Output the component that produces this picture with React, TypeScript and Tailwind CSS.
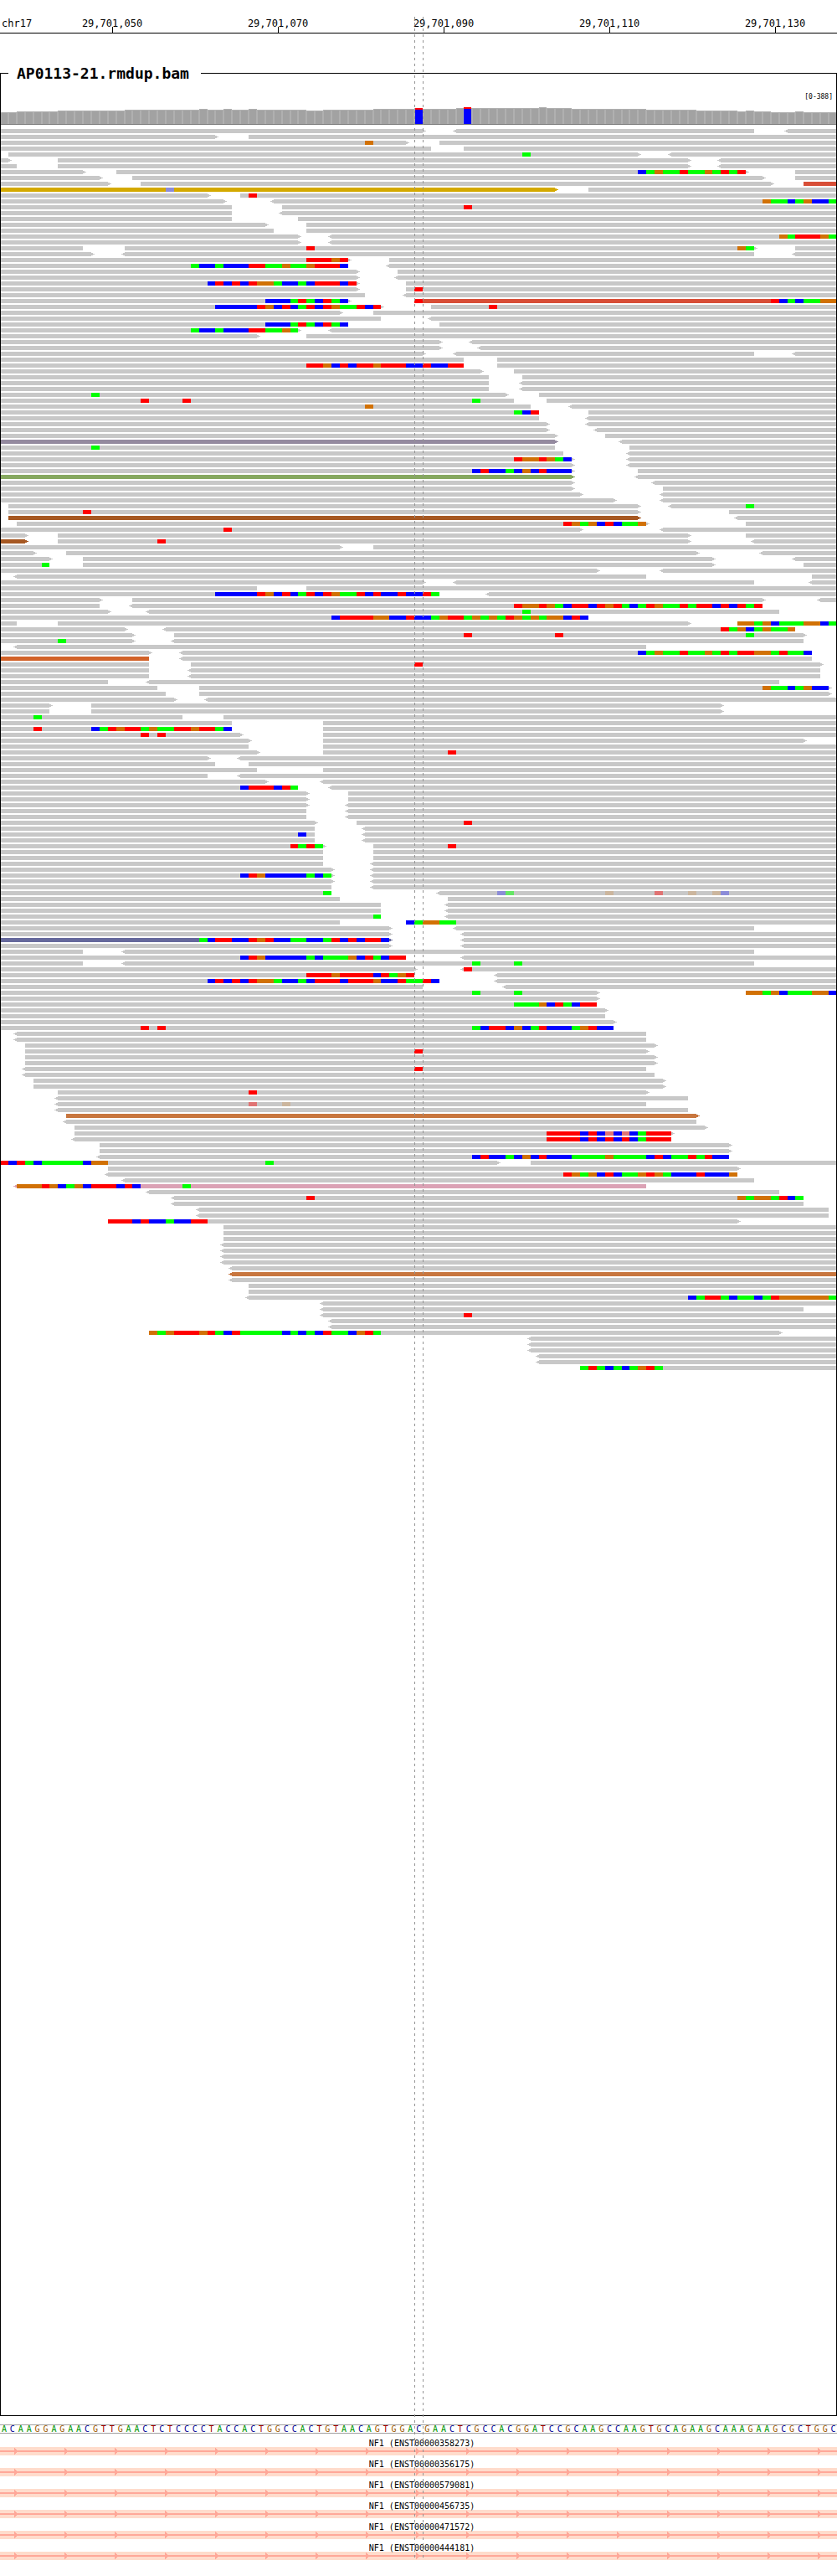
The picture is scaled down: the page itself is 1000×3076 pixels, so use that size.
import React from "react";

const BASE_WIDTH = 9.9;
const ROW_PITCH = 7;
const ROW_HEIGHT = 5;

const ALIGNMENT_FILL: Record<string, string> = {
  gray: "#c8c8c8",
  gold: "#d4a900",
  red: "#d84e37",
  purple: "#948a9f",
  green: "#86a860",
  brown: "#a65822",
  orange: "#d26229",
  copper: "#c8763e",
  slate: "#66699c",
  pink: "#dba2b5",
};

// Lower case letters are mismatches with a low base quality.
const MISMATCH_FILL: Record<string, string> = {
  A: "#00ff00",
  C: "#0000ff",
  G: "#d17105",
  T: "#ff0000",
  a: "#66e666",
  c: "#8c8cd8",
  g: "#ccb69e",
  t: "#e07474",
};

// One string per packed row. "12-88>" is a read between two base offsets with
// its strand arrow, "!name" before a read picks a fill, "37:T" is a mismatch.
const ALIGNMENT_ROWS: string[] = [
  "0-51> <55-91 <95-101",
  "0-26> 30-101",
  "0-49> 53-101 44:G",
  "0-52 56-101",
  "1-77> <81-101 63:A",
  "0-1> 7-83> <87-101",
  "0-2 7-83> <87-101",
  "0-10> 14-90> 96-101 77:CAGAATAAGATAT",
  "0-12> 16-92> 96-101",
  "0-13> 17-93> !red97-101",
  "!gold0-67> 71-101 20:c",
  "0-25> 29-101 30:T",
  "0-27> <33-101 92:GAACAGCCA",
  "0-28 34-101 56:T",
  "0-28 <34-101",
  "0-28 36-101",
  "0-32> 37-101",
  "0-33 37-101",
  "0-36> <40-101 94:GATTTGA",
  "0-36> <40-101",
  "0-10 15-91> 96-101 37:T 89:GA",
  "0-11> <15-91 <96-101",
  "0-42> 47-101 37:TTTGT",
  "0-42 <47-101 23:ACCACCCTTAAGAAGTTTC",
  "0-43> 48-101",
  "0-43> <48-101",
  "0-43> 49-101 25:CTCTCTGGACCACTTTCT",
  "0-43> 49-101 50:T",
  "0-44 <49-101",
  "0-42> !red50-101 32:CCCATACTAC 50:T 93:TCACAAGG",
  "0-46> 52-101 26:CCCCCTGCTCATCTGAATCT 59:T",
  "0-41> 45-101",
  "0-46 <52-101",
  "0-42 53-101 32:CCCATACTAC",
  "0-36> <40-101 23:ACCACCCTTAAGA",
  "0-31> 37-101",
  "0-53> <57-101",
  "0-53> <58-101",
  "0-51> <55-91 <96-101",
  "0-56 60-101",
  "0-56 60-101 37:TTGCTCTTGTTTCCTCCTT",
  "0-58> 62-101",
  "0-59 63-101",
  "0-59 <63-101",
  "0-59 <63-101",
  "0-61> 65-101 11:A",
  "0-62 66-101 17:T 22:T 57:A",
  "0-64 <69-101 44:G",
  "0-65 71-101 62:ACT",
  "0-65 <71-101",
  "0-66> <71-101",
  "0-66> <72-101",
  "0-67> 73-101",
  "!purple0-67> <75-101",
  "0-67 76-101 11:A",
  "0-68 <76-101",
  "0-69> <76-101 62:TGGTGAC",
  "0-69> <76-101",
  "0-69> 77-101 57:CTCCACGCTCCC",
  "!green0-69> <77-101",
  "0-69> <79-101",
  "0-69> 80-101",
  "0-70> <80-101",
  "0-74> <80-101",
  "1-77> <81-101 90:A",
  "1-77> 88-101 10:T",
  "!brown1-77> <89-101",
  "2-78> 90-101 68:TGAGCTCAAG",
  "0-70> <80-101 27:T",
  "0-3> 7-83> 90-101",
  "!brown0-3> 7-83> <91-101 19:T",
  "0-41> 45-101",
  "0-4> 8-84> <92-101",
  "0-6> 10-86> <96-101",
  "0-6 10-86> 97-101 5:A",
  "0-72> <80-101",
  "<2-78 98-101",
  "0-51> <55-91 <98-101",
  "0-31 37-101",
  "0-53 <59-101 26:CCCCCTGCTCATCTGAATCTCCTCCTA",
  "0-12> 16-92> <99-101",
  "0-12 <16-92 62:TGGTGACTTCTGTACATGAATATTCTCTAT",
  "0-13> <18-94 63:A",
  "0-71 40:CTTTTGGCCTCCAGTTAGAGATGAGAGGCTC",
  "0-2 7-83> 89-101 89:GGAGCAAAGGCA",
  "0-15> <20-96 87:TAGCAGAAG",
  "0-16> 21-97> 56:T 67:T 90:A",
  "0-16> <21-97 7:A",
  "<2-78",
  "0-18> <22-98 77:CAGAATAAGATATTGGATAAC",
  "!orange0-18 <22-98",
  "0-18 23-99> 50:T",
  "0-18 <23-99",
  "0-18 <23-99",
  "0-13 <18-94",
  "0-19 24-100> 92:GAACAGCC",
  "0-20 24-100>",
  "0-21> <25-101",
  "0-6> 11-87>",
  "0-6 11-87>",
  "0-22 27-101 4:A",
  "0-28 39-101",
  "0-28 39-101 4:T 11:CATGTTAGAATTGTTAC",
  "0-29> 39-101 17:T 19:T",
  "0-30> 39-97>",
  "0-30 39-101",
  "0-31> 39-101 54:T",
  "0-25> <29-101",
  "0-26 30-101",
  "0-31 39-101",
  "0-25 <29-101",
  "0-32> <39-101",
  "0-36 <40-101 29:CTTTCTA",
  "0-37> 42-101",
  "0-37> 42-101",
  "0-37> <42-101",
  "0-37 <42-101",
  "0-37 <42-101",
  "0-38> 43-101 56:T",
  "0-38 <44-101",
  "0-38 <44-101 36:C",
  "0-38 <44-101",
  "0-39> 45-101 35:TATA 54:T",
  "0-39 45-101",
  "0-39 45-101",
  "0-39 <45-101",
  "0-40> <45-101",
  "0-40> <45-101 29:CTGCCCCCACA",
  "0-40> <45-101",
  "0-40 <45-101",
  "0-40 <53-101 39:A 60:ca 73:g 79:t 83:g 86:gc",
  "0-41 54-101",
  "0-46 <54-101",
  "0-46 <54-101",
  "0-46 <54-101 45:A",
  "0-41 49-101 49:CAGGAA",
  "0-47> <55-91",
  "0-47> <56-101",
  "!slate0-47> <56-101 24:ACTTCCTGTCCAACCATCTCTTC",
  "0-47> <56-101",
  "0-10 <15-91",
  "0-49 <56-101 29:CTGCCCCCACAAAGCTACTT",
  "0-10 <15-91 57:A 62:A",
  "0-50> <56-101 56:T",
  "0-50 <60-101 37:TTTGTTTTCTAGT",
  "0-53 <60-101 25:CTCTCTGGACCACTTTCTTTGCCTAATC",
  "0-51 <61-101",
  "0-72> 90-101 57:A 62:A 90:GGAGCAAAGGC",
  "0-72>",
  "0-72 62:AAAGCTACTT",
  "0-73>",
  "0-73",
  "0-74>",
  "0-74 17:T 19:T 57:ACTTCGCATCCCAGTCC",
  "<2-78",
  "<2-78",
  "3-79>",
  "3-78> 50:T",
  "3-79>",
  "3-79>",
  "<3-78 50:T",
  "<3-79",
  "4-80>",
  "4-80>",
  "7-78> 30:T",
  "<7-83",
  "<7-78 30:t 34:g",
  "<7-83",
  "!copper8-84>",
  "<8-84",
  "9-85>",
  "9-81> 66:TTTTCTCtCtCATTT",
  "<9-81 66:TTTTCTCTCTCATTT",
  "12-88>",
  "12-88>",
  "<12-88 57:CTCCACGCTCCCAAAAGAAAACTCAATATCC",
  "0-60> 64-101 0:TCTACAAAAACGG 32:A",
  "13-89>",
  "<13-89 68:TGAGCTCAAGTGACCCTCCCG",
  "<15-91",
  "!pink<2-78 2:GGGTGCAGCTTTCTC 22:A",
  "<18-94",
  "<21-97 37:T 89:GAGGATCA",
  "<21-97",
  "<24-100",
  "<24-100",
  "13-89> 13:TTTCTCCACCTT",
  "27-101",
  "27-101",
  "27-101",
  "<27-101",
  "<27-101",
  "<27-101",
  "<27-101",
  "<28-101",
  "!copper<28-101",
  "<28-101",
  "30-101",
  "30-101",
  "<30-101 83:CATTACAACATGGGGGGA",
  "<39-101",
  "<39-97",
  "<39-101 56:T",
  "<40-101",
  "<40-101",
  "18-94> 18:GAGTTTGTACTAAAAACACACTAACGTA",
  "<64-101",
  "<64-101",
  "<64-101",
  "<65-101",
  "<65-101",
  "70-101 70:ATACACAGTA",
];

// [number of consecutive bases, column height in pixels]
const COVERAGE_RUNS: [number, number][] = [
  [2, 14], [5, 15], [8, 16], [9, 17], [1, 18], [2, 17], [1, 18], [2, 17],
  [1, 18], [6, 17], [2, 16], [6, 17], [5, 18], [1, 19], [4, 18], [10, 19],
  [1, 20], [3, 19], [9, 18], [6, 17], [5, 16], [1, 15], [1, 16], [2, 15],
  [3, 14], [1, 15], [5, 14],
];
const COVERAGE_HEIGHT = 21;
const COVERAGE = COVERAGE_RUNS.flatMap(([count, height]) =>
  Array.from({ length: count }, () => height)
);

const VARIANTS = [
  { base: 50, left: 496, height: 19 },
  { base: 56, left: 554, height: 20 },
];

const SEQUENCE =
  "ACAAGGAGAACGTTGAACTCTCCCCTACCACTGGCCACTGTAACAGTGGACGAACTCGCCACGGATCCGCAAGCCAAGTGCAGAAGCAAAGAAGCGCTGGC";

const SEQUENCE_CLASS: Record<string, string> = {
  A: "text-[#009600]",
  C: "text-[#000096]",
  G: "text-[#a05a00]",
  T: "text-[#a00000]",
};

const POSITIONS = [
  "29,701,050",
  "29,701,070",
  "29,701,090",
  "29,701,110",
  "29,701,130",
];

const TRANSCRIPTS = [
  "ENST00000358273",
  "ENST00000356175",
  "ENST00000579081",
  "ENST00000456735",
  "ENST00000471572",
  "ENST00000444181",
];

const toX = (base: number) => Math.round(base * BASE_WIDTH);

function Read({ token, y }: { token: string; y: number }) {
  const match = /^(?:!([a-z]+?))?(<?)(\d+)-(\d+)(>?)$/.exec(token);
  if (!match) return null;
  const fill = ALIGNMENT_FILL[match[1] ?? "gray"];
  const left = toX(Number(match[3]));
  const right = toX(Number(match[4]));
  return (
    <g fill={fill}>
      <rect x={left} y={y} width={right - left} height={ROW_HEIGHT} />
      {match[2] && (
        <path d={`M${left} ${y + 1}h-2v1h-2v1h2v1h2z`} />
      )}
      {match[5] && (
        <path d={`M${right} ${y + 1}h2v1h2v1h-2v1h-2z`} />
      )}
    </g>
  );
}

function Mismatches({ token, y }: { token: string; y: number }) {
  const [start, letters] = token.split(":");
  return (
    <>
      {letters.split("").map((letter, i) => {
        const left = toX(Number(start) + i);
        return (
          <rect
            key={i}
            x={left}
            y={y}
            width={toX(Number(start) + i + 1) - left}
            height={ROW_HEIGHT}
            fill={MISMATCH_FILL[letter]}
          />
        );
      })}
    </>
  );
}

function AlignmentTrack() {
  const height = ALIGNMENT_ROWS.length * ROW_PITCH;
  return (
    <svg
      className="block h-[1484px] w-full"
      viewBox={`1 0 998 ${height}`}
      preserveAspectRatio="none"
      shapeRendering="crispEdges"
      role="img"
      aria-label="Aligned reads"
    >
      {ALIGNMENT_ROWS.map((row, i) => (
        <g key={i}>
          {row.split(" ").map((token, j) =>
            token.includes(":") ? (
              <Mismatches key={j} token={token} y={i * ROW_PITCH} />
            ) : (
              <Read key={j} token={token} y={i * ROW_PITCH} />
            )
          )}
        </g>
      ))}
    </svg>
  );
}

function CoverageTrack() {
  const floor = COVERAGE_HEIGHT - 1;
  return (
    <svg
      className="block h-[21px] w-full"
      viewBox={`1 0 998 ${COVERAGE_HEIGHT}`}
      preserveAspectRatio="none"
      shapeRendering="crispEdges"
      role="img"
      aria-label="Coverage"
    >
      {COVERAGE.map((h, k) => (
        <g key={k}>
          <rect x={toX(k)} y={floor - h} width={toX(k + 1) - toX(k)} height={h} fill="#b0b0b0" />
          <rect x={toX(k) + 1} y={floor - h + 1} width={toX(k + 1) - toX(k) - 2} height={h - 1} fill="#a2a2a2" />
        </g>
      ))}
      {VARIANTS.map(({ base, left, height }) => (
        <g key={base}>
          <rect x={left} y={floor - height} width={9} height={2} fill="#ff0000" />
          <rect x={left} y={floor - height + 2} width={9} height={height - 2} fill="#0000ff" />
        </g>
      ))}
      <rect x={0} y={floor} width={1000} height={1} fill="#777777" />
    </svg>
  );
}

function Ruler() {
  return (
    <header className="relative flex h-10 overflow-hidden border-b border-black text-xs leading-[14px]">
      <span className="absolute left-0.5 top-[21px]">chr17</span>
      <span className="w-[3.5%] shrink-0" />
      {POSITIONS.map((position) => (
        <div key={position} className="flex w-[19.8%] shrink-0 flex-col items-center pt-[21px]">
          <span className="-mb-[3px]">{position}</span>
          <i className="h-[7px] w-px bg-black" />
        </div>
      ))}
    </header>
  );
}

function Transcript({ id }: { id: string }) {
  return (
    <div className="h-[25px]">
      <div className="h-[15px] pl-2 pt-[5px] text-center text-[10px] leading-[12px]">
        NF1 ({id})
      </div>
      <svg
        className="block h-2.5 w-full bg-[#ffdccc]"
        viewBox="0 0 1000 10"
        preserveAspectRatio="none"
        shapeRendering="crispEdges"
        aria-hidden="true"
      >
        <rect x={0} y={4} width={1000} height={2} fill="#ffa899" />
        {Array.from({ length: 17 }, (_, i) => (
          <path
            key={i}
            d={`M${17 + i * 60} 1h1v1h1v1h1v4h-1v1h-1v1h-1z`}
            fill="#ffa899"
          />
        ))}
      </svg>
    </div>
  );
}

export default function App() {
  return (
    <main className="relative w-full overflow-hidden bg-white pb-5 font-['DejaVu_Sans_Mono',monospace] text-black">
      <Ruler />

      <fieldset className="mt-[35px] border border-black">
        <legend className="ml-[9px] pl-2.5 pr-3.5 text-lg font-bold leading-[25px]">
          AP0113-21.rmdup.bam
        </legend>
        <div className="flex h-7 items-end justify-end pb-[7px] pr-1 text-[8px] leading-[10px]">
          [0-388]
        </div>
        <CoverageTrack />
        <div className="pb-[1246px] pt-[5px]">
          <AlignmentTrack />
        </div>
      </fieldset>

      <div className="mt-2.5 flex h-[11px] border-y border-[#a0a0a0] text-center text-[10px] leading-[9px]">
        {SEQUENCE.split("").map((base, i) => (
          <span key={i} className={`min-w-0 flex-1 ${SEQUENCE_CLASS[base]}`}>
            {base}
          </span>
        ))}
      </div>

      <section className="mt-px h-[150px] overflow-hidden" aria-label="Transcripts">
        {TRANSCRIPTS.map((id) => (
          <Transcript key={id} id={id} />
        ))}
      </section>

      <div className="pointer-events-none absolute bottom-[22px] left-[49.5%] top-5 w-px bg-[repeating-linear-gradient(to_bottom,#949494_0_3px,transparent_3px_7px)]" />
      <div className="pointer-events-none absolute bottom-[22px] left-[50.5%] top-5 w-px bg-[repeating-linear-gradient(to_bottom,#949494_0_3px,transparent_3px_7px)]" />
    </main>
  );
}
